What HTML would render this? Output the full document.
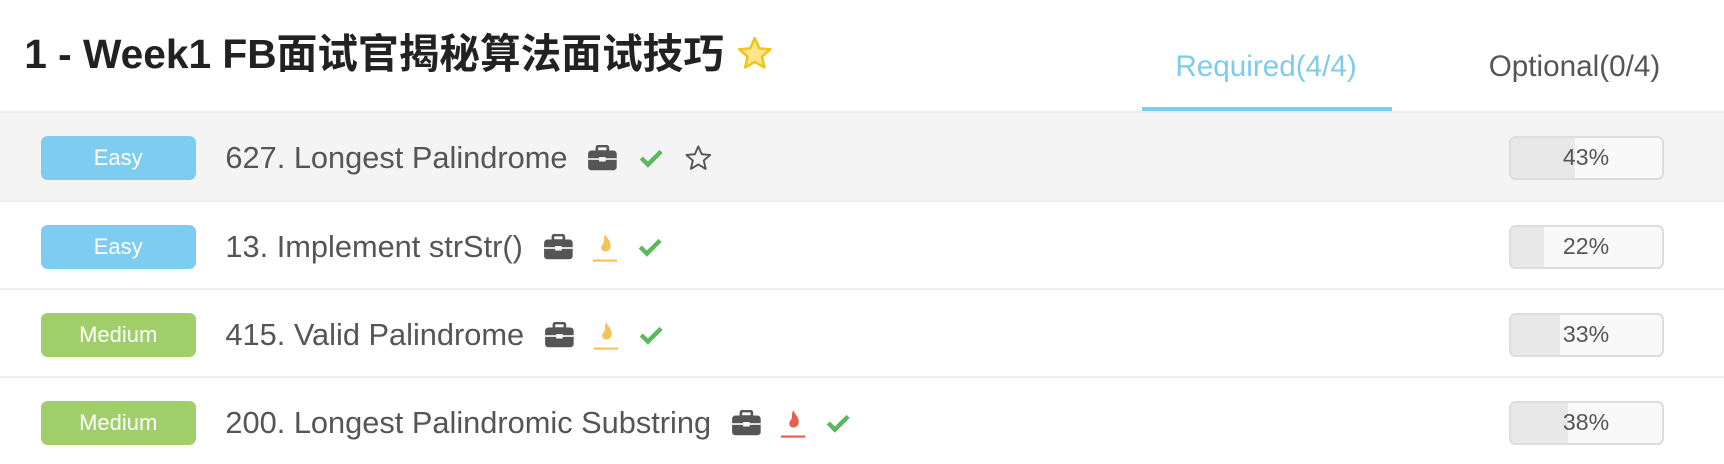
<!DOCTYPE html>
<html><head><meta charset="utf-8"><style>
*{margin:0;padding:0;box-sizing:border-box}
body{width:1724px;height:460px;background:#fff;font-family:"Liberation Sans","Noto Sans CJK SC",sans-serif;overflow:hidden}
#w{zoom:1.0995;position:relative;width:1568px;height:420px}
.title{position:absolute;left:22px;top:27px;font-size:37px;font-weight:bold;color:#222;white-space:nowrap;line-height:44px}
.tab{position:absolute;top:45px;font-size:27px;white-space:nowrap;line-height:32px}
.ul{position:absolute;left:1039px;top:97px;width:227px;height:4px;background:#7ecbea}
.row{position:absolute;left:0;width:1568px;height:80px;border-top:2px solid #eceef2}
.badge{position:absolute;left:37px;top:21px;width:141px;height:40px;border-radius:6px;color:#fff;font-size:20px;text-align:center;line-height:40px}
.name{position:absolute;left:205px;top:24px;font-size:28px;line-height:34px;color:#555;white-space:nowrap;display:flex;align-items:center}
.name svg{margin-left:18px}
.prog{position:absolute;left:1372px;top:21px;width:141px;height:40px;border:2px solid #ddd;border-radius:6px;background:#f9f9f9;overflow:hidden}
.prog .f{position:absolute;left:0;top:0;bottom:0;background:#e8e8e8}
.prog span{position:absolute;left:0;right:0;text-align:center;line-height:36px;font-size:21px;color:#555}
</style></head><body><div id="w">
<div class="title">1 - Week1 FB面试官揭秘算法面试技巧 <svg width="36" height="34" viewBox="0 0 24 24" style="vertical-align:-4px"><path d="M12 2l2.9 6.6 7.1.6-5.4 4.7 1.6 7-6.2-3.7-6.2 3.7 1.6-7L2 9.2l7.1-.6z" fill="#fde68a" stroke="#f0c419" stroke-width="1.6" stroke-linejoin="round"/></svg></div>
<div class="tab" style="left:1069px;color:#7ecbea">Required(4/4)</div>
<div class="tab" style="left:1354px;color:#555">Optional(0/4)</div>
<div class="ul"></div>

<div class="row" style="top:101px;background:#f4f4f4;height:82px">
<div class="badge" style="background:#7ecdf0">Easy</div>
<div class="name">627. Longest Palindrome
<svg width="28" height="24" viewBox="0 0 28 24"><rect x="9" y="1" width="10" height="5" rx="1.5" fill="none" stroke="#555" stroke-width="2.4"/><rect x="1" y="5" width="26" height="18" rx="3" fill="#555"/><rect x="1" y="12" width="26" height="1.5" fill="#f4f4f4"/><rect x="11" y="11" width="6" height="4" fill="#f4f4f4"/></svg>
<svg width="24" height="20" viewBox="0 0 24 20"><path d="M3 10l6 6L21 4" fill="none" stroke="#5cb85c" stroke-width="4"/></svg>
<svg width="26" height="26" viewBox="0 0 24 24"><path d="M12 2l2.9 6.6 7.1.6-5.4 4.7 1.6 7-6.2-3.7-6.2 3.7 1.6-7L2 9.2l7.1-.6z" fill="none" stroke="#555" stroke-width="1.6" stroke-linejoin="round"/></svg>
</div>
<div class="prog"><div class="f" style="width:43%"></div><span>43%</span></div>
</div>

<div class="row" style="top:182px">
<div class="badge" style="background:#7ecdf0">Easy</div>
<div class="name">13. Implement strStr()
<svg width="28" height="24" viewBox="0 0 28 24"><rect x="9" y="1" width="10" height="5" rx="1.5" fill="none" stroke="#555" stroke-width="2.4"/><rect x="1" y="5" width="26" height="18" rx="3" fill="#555"/><rect x="1" y="12" width="26" height="1.5" fill="#fff"/><rect x="11" y="11" width="6" height="4" fill="#fff"/></svg>
<svg width="22" height="28" viewBox="0 0 22 28"><path d="M11 2c2 4 6 7 5 12-1 4-6 5-8 2-2-3 2-5 2-8 0-2 0-4 1-6z" fill="#f5c25a"/><rect x="0" y="25" width="22" height="2" fill="#f5c25a"/></svg>
<svg width="24" height="20" viewBox="0 0 24 20"><path d="M3 10l6 6L21 4" fill="none" stroke="#5cb85c" stroke-width="4"/></svg>
</div>
<div class="prog"><div class="f" style="width:22%"></div><span>22%</span></div>
</div>

<div class="row" style="top:262px">
<div class="badge" style="background:#a0ce6a">Medium</div>
<div class="name">415. Valid Palindrome
<svg width="28" height="24" viewBox="0 0 28 24"><rect x="9" y="1" width="10" height="5" rx="1.5" fill="none" stroke="#555" stroke-width="2.4"/><rect x="1" y="5" width="26" height="18" rx="3" fill="#555"/><rect x="1" y="12" width="26" height="1.5" fill="#fff"/><rect x="11" y="11" width="6" height="4" fill="#fff"/></svg>
<svg width="22" height="28" viewBox="0 0 22 28"><path d="M11 2c2 4 6 7 5 12-1 4-6 5-8 2-2-3 2-5 2-8 0-2 0-4 1-6z" fill="#f5c25a"/><rect x="0" y="25" width="22" height="2" fill="#f5c25a"/></svg>
<svg width="24" height="20" viewBox="0 0 24 20"><path d="M3 10l6 6L21 4" fill="none" stroke="#5cb85c" stroke-width="4"/></svg>
</div>
<div class="prog"><div class="f" style="width:33%"></div><span>33%</span></div>
</div>

<div class="row" style="top:342px">
<div class="badge" style="background:#a0ce6a">Medium</div>
<div class="name">200. Longest Palindromic Substring
<svg width="28" height="24" viewBox="0 0 28 24"><rect x="9" y="1" width="10" height="5" rx="1.5" fill="none" stroke="#555" stroke-width="2.4"/><rect x="1" y="5" width="26" height="18" rx="3" fill="#555"/><rect x="1" y="12" width="26" height="1.5" fill="#fff"/><rect x="11" y="11" width="6" height="4" fill="#fff"/></svg>
<svg width="22" height="28" viewBox="0 0 22 28"><path d="M11 2c2 4 6 7 5 12-1 4-6 5-8 2-2-3 2-5 2-8 0-2 0-4 1-6z" fill="#e8604c"/><rect x="0" y="25" width="22" height="2" fill="#e8604c"/></svg>
<svg width="24" height="20" viewBox="0 0 24 20"><path d="M3 10l6 6L21 4" fill="none" stroke="#5cb85c" stroke-width="4"/></svg>
</div>
<div class="prog"><div class="f" style="width:38%"></div><span>38%</span></div>
</div>
</div></body></html>
